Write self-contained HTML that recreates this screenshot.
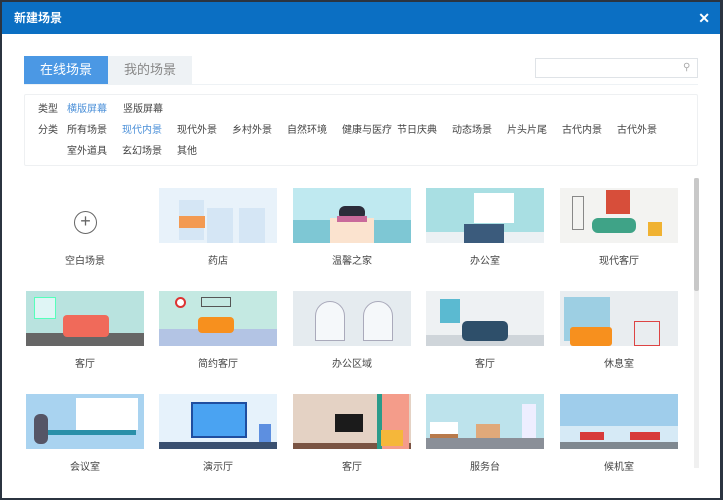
<!DOCTYPE html>
<html><head><meta charset="utf-8"><style>
*{margin:0;padding:0;box-sizing:border-box}
body{width:723px;height:500px;background:#2b3440;position:relative;overflow:hidden;font-family:"Liberation Sans","Noto Sans CJK SC",sans-serif;}
#dlg{position:absolute;left:2px;top:2px;width:718px;height:496px;background:#fff}
#tb{position:absolute;left:0;top:0;width:718px;height:32px;background:#0b6fc3;color:#fff;font-size:12px;font-weight:bold;line-height:32px;padding-left:12px}
#tb .x{position:absolute;right:10px;top:0;font-size:14px}
.a{position:absolute}
.tab{position:absolute;top:54px;height:28px;width:84px;text-align:center;line-height:28px;font-size:13px}
.f{position:absolute;font-size:10px;color:#444;line-height:12px}
.th{position:absolute;width:118px;height:55px;overflow:hidden}
.th div{position:absolute}
.lb{position:absolute;width:118px;text-align:center;font-size:10px;color:#444}
</style></head><body>
<div id="dlg">
<div id="tb">新建场景<span class="x">✕</span></div>
<div class="tab" style="left:22px;background:#4b98e4;color:#fff">在线场景</div>
<div class="tab" style="left:106px;background:#eef2f5;color:#888">我的场景</div>
<div class="a" style="left:22px;top:82px;width:674px;height:1px;background:#eef2f5"></div>
<div class="a" style="left:533px;top:56px;width:163px;height:20px;border:1px solid #dfe3e7"></div>
<div class="a" style="left:681px;top:60px;font-size:10px;color:#aaa">⚲</div>
<div class="a" style="left:22px;top:92px;width:674px;height:72px;border:1px solid #eef0f2;border-radius:2px"></div>
<div class="f" style="left:36px;top:102px">类型</div>
<div class="f" style="left:65px;top:102px;color:#4a8fd8">横版屏幕</div>
<div class="f" style="left:121px;top:102px">竖版屏幕</div>
<div class="f" style="left:36px;top:123px">分类</div>
<div class="f" style="left:65px;top:123px">所有场景</div>
<div class="f" style="left:120px;top:123px;color:#4a8fd8">现代内景</div>
<div class="f" style="left:175px;top:123px">现代外景</div>
<div class="f" style="left:230px;top:123px">乡村外景</div>
<div class="f" style="left:285px;top:123px">自然环境</div>
<div class="f" style="left:340px;top:123px">健康与医疗</div>
<div class="f" style="left:395px;top:123px">节日庆典</div>
<div class="f" style="left:450px;top:123px">动态场景</div>
<div class="f" style="left:505px;top:123px">片头片尾</div>
<div class="f" style="left:560px;top:123px">古代内景</div>
<div class="f" style="left:615px;top:123px">古代外景</div>
<div class="f" style="left:65px;top:144px">室外道具</div>
<div class="f" style="left:120px;top:144px">玄幻场景</div>
<div class="f" style="left:175px;top:144px">其他</div>

<div class="a" style="left:692px;top:176px;width:5px;height:290px;background:#f0f0f0"></div>
<div class="a" style="left:692px;top:176px;width:5px;height:113px;background:#c8c8c8;border-radius:2px"></div>

<!-- row1 -->
<div class="a" style="left:72px;top:209px;width:23px;height:23px;border:1.5px solid #666;border-radius:50%;text-align:center;line-height:19px;font-size:18px;color:#666">+</div>
<div class="lb" style="left:24px;top:250px">空白场景</div>

<div class="th" style="left:157px;top:186px;background:#e8f2fa"><div style="left:20px;top:12px;width:25px;height:40px;background:#d5e6f5"></div><div style="left:48px;top:20px;width:26px;height:35px;background:#d5e6f5"></div><div style="left:80px;top:20px;width:26px;height:35px;background:#d5e6f5"></div><div style="left:20px;top:28px;width:26px;height:12px;background:#f39a52"></div></div>
<div class="lb" style="left:157px;top:250px">药店</div>

<div class="th" style="left:291px;top:186px;background:#bfe9f0"><div style="left:0;top:32px;width:118px;height:23px;background:#7ec7d4"></div><div style="left:37px;top:30px;width:44px;height:25px;background:#fbe3cf"></div><div style="left:46px;top:18px;width:26px;height:14px;background:#2c2c3a;border-radius:6px"></div><div style="left:44px;top:28px;width:30px;height:6px;background:#c96a9b"></div></div>
<div class="lb" style="left:291px;top:250px">温馨之家</div>

<div class="th" style="left:424px;top:186px;background:#a9dfe3"><div style="left:0;top:44px;width:118px;height:11px;background:#ecf1f4"></div><div style="left:48px;top:5px;width:40px;height:30px;background:#fff"></div><div style="left:38px;top:36px;width:40px;height:19px;background:#3b5b7c"></div></div>
<div class="lb" style="left:424px;top:250px">办公室</div>

<div class="th" style="left:558px;top:186px;background:#f3f3f1"><div style="left:46px;top:2px;width:24px;height:24px;background:#d74e3a"></div><div style="left:32px;top:30px;width:44px;height:15px;background:#3fa387;border-radius:6px"></div><div style="left:88px;top:34px;width:14px;height:14px;background:#f0b232"></div><div style="left:12px;top:8px;width:12px;height:34px;border:1px solid #888"></div></div>
<div class="lb" style="left:558px;top:250px">现代客厅</div>

<!-- row2 -->
<div class="th" style="left:24px;top:289px;background:#b9e3df"><div style="left:0;top:42px;width:118px;height:13px;background:#666"></div><div style="left:37px;top:24px;width:46px;height:22px;background:#f06a5a;border-radius:4px"></div><div style="left:8px;top:6px;width:22px;height:22px;background:#dff5f5;border:1px solid #5fb"></div></div>
<div class="lb" style="left:24px;top:353px">客厅</div>

<div class="th" style="left:157px;top:289px;background:#c4e9e2"><div style="left:0;top:38px;width:118px;height:17px;background:#b3c4e4"></div><div style="left:39px;top:26px;width:36px;height:16px;background:#f7901e;border-radius:4px"></div><div style="left:16px;top:6px;width:11px;height:11px;border:2px solid #d33;border-radius:50%;background:#fff"></div><div style="left:42px;top:6px;width:30px;height:10px;border:1px solid #555"></div></div>
<div class="lb" style="left:157px;top:353px">简约客厅</div>

<div class="th" style="left:291px;top:289px;background:#e5ebef"><div style="left:22px;top:10px;width:30px;height:40px;background:#f5f8fa;border-radius:15px 15px 0 0;border:1px solid #aab"></div><div style="left:70px;top:10px;width:30px;height:40px;background:#f5f8fa;border-radius:15px 15px 0 0;border:1px solid #aab"></div></div>
<div class="lb" style="left:291px;top:353px">办公区域</div>

<div class="th" style="left:424px;top:289px;background:#eef1f3"><div style="left:0;top:44px;width:118px;height:11px;background:#cfd5da"></div><div style="left:14px;top:8px;width:20px;height:24px;background:#5bbad1"></div><div style="left:36px;top:30px;width:46px;height:20px;background:#2e4f6a;border-radius:5px"></div></div>
<div class="lb" style="left:424px;top:353px">客厅</div>

<div class="th" style="left:558px;top:289px;background:#e9edf0"><div style="left:4px;top:6px;width:46px;height:44px;background:#9dcfe3"></div><div style="left:10px;top:36px;width:42px;height:19px;background:#f7901e;border-radius:3px"></div><div style="left:74px;top:30px;width:26px;height:25px;border:1px solid #d44"></div></div>
<div class="lb" style="left:558px;top:353px">休息室</div>

<!-- row3 -->
<div class="th" style="left:24px;top:392px;background:#a9d3f0"><div style="left:50px;top:4px;width:62px;height:32px;background:#fff"></div><div style="left:20px;top:36px;width:90px;height:5px;background:#2a8fa8"></div><div style="left:8px;top:20px;width:14px;height:30px;background:#556;border-radius:6px"></div></div>
<div class="lb" style="left:24px;top:456px">会议室</div>

<div class="th" style="left:157px;top:392px;background:#e6f2fb"><div style="left:0;top:48px;width:118px;height:7px;background:#3a5070"></div><div style="left:32px;top:8px;width:56px;height:36px;background:#4aa3f2;border:2px solid #1f4ea0"></div><div style="left:100px;top:30px;width:12px;height:18px;background:#5d8fe0"></div></div>
<div class="lb" style="left:157px;top:456px">演示厅</div>

<div class="th" style="left:291px;top:392px;background:#e4d2c4"><div style="left:0;top:49px;width:118px;height:6px;background:#7a5443"></div><div style="left:42px;top:20px;width:28px;height:18px;background:#1b1b1b"></div><div style="left:84px;top:0;width:32px;height:55px;background:#f49c8a"></div><div style="left:84px;top:0;width:5px;height:55px;background:#2b9b8a"></div><div style="left:88px;top:36px;width:22px;height:16px;background:#f5b73a"></div></div>
<div class="lb" style="left:291px;top:456px">客厅</div>

<div class="th" style="left:424px;top:392px;background:#bde3ec"><div style="left:0;top:44px;width:118px;height:11px;background:#8a8f98"></div><div style="left:4px;top:28px;width:28px;height:16px;background:#fff;border-bottom:4px solid #b87a4b"></div><div style="left:50px;top:30px;width:24px;height:14px;background:#e0a97a"></div><div style="left:96px;top:10px;width:14px;height:34px;background:#eef"></div></div>
<div class="lb" style="left:424px;top:456px">服务台</div>

<div class="th" style="left:558px;top:392px;background:#9fcdeb"><div style="left:0;top:32px;width:118px;height:23px;background:#d6eaf6"></div><div style="left:0;top:48px;width:118px;height:7px;background:#7f8890"></div><div style="left:20px;top:38px;width:24px;height:8px;background:#d73a3a"></div><div style="left:70px;top:38px;width:30px;height:8px;background:#d73a3a"></div></div>
<div class="lb" style="left:558px;top:456px">候机室</div>
</div>
</body></html>
